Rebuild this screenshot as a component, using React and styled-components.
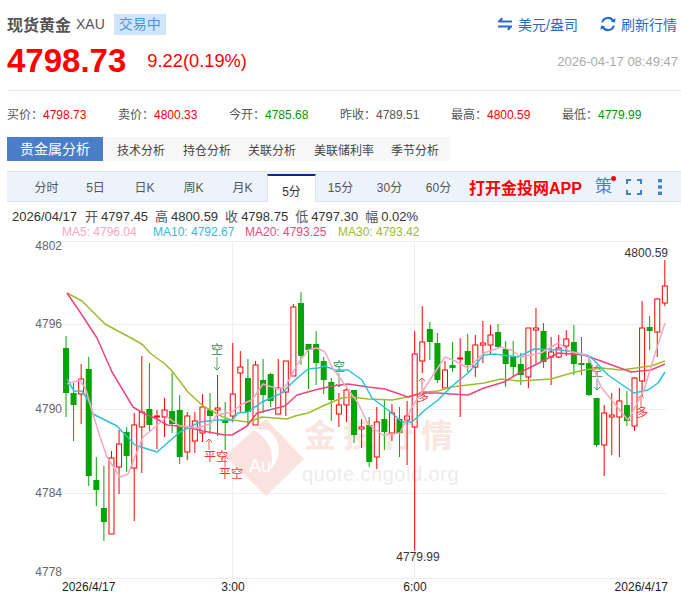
import React from "react";
import styled, { createGlobalStyle } from "styled-components";

const GlobalStyle = createGlobalStyle`
  html, body {
    margin: 0;
    padding: 0;
    background: #fff;
    overflow: hidden;
  }
  body {
    font-family: "Liberation Sans", "Noto Sans CJK SC", sans-serif;
  }
`;

const Page = styled.div`
  width: 681px;
  height: 594px;
  overflow: hidden;
  color: #555;
`;

const Header = styled.div`
  height: 90px;
  margin-left: 7px;
  border-bottom: 1px solid #e9e9e9;
  display: grid;
  grid-template-columns: 1fr auto;
  grid-template-rows: 37px 38px;
`;

const TitleGroup = styled.div`
  display: flex;
  align-items: center;
  padding-top: 11px;
  height: 26px;
`;

const Title = styled.span`
  font-size: 16px;
  font-weight: 700;
  color: #555;
`;

const Code = styled.span`
  font-size: 14px;
  color: #555;
  margin-left: 5px;
`;

const Badge = styled.span`
  margin-left: 9px;
  width: 52px;
  height: 21px;
  line-height: 21px;
  background: #d0e6fb;
  color: #4b93e6;
  font-size: 14px;
  text-align: center;
`;

const Actions = styled.div`
  display: flex;
  align-items: center;
  gap: 22px;
  padding-top: 10px;
  height: 27px;
  padding-right: 4px;
`;

const Action = styled.span`
  display: flex;
  align-items: center;
  gap: 5px;
  font-size: 14px;
  color: #2a6bc9;
  svg {
    display: block;
  }
`;

const PriceGroup = styled.div`
  display: flex;
  align-items: center;
  height: 38px;
  margin-top: 5px;
`;

const Price = styled.span`
  font-size: 33px;
  font-weight: 700;
  color: #f00;
  line-height: 38px;
`;

const Change = styled.span`
  font-size: 18.3px;
  color: #f00;
  margin-left: 21px;
`;

const Stamp = styled.div`
  justify-self: end;
  align-self: center;
  font-size: 13px;
  color: #aaa;
  padding: 11px 3px 0 0;
`;

const Stats = styled.div`
  display: grid;
  grid-template-columns: repeat(6, 111px);
  padding: 16px 0 0 7px;
  height: 30px;
`;

const Stat = styled.div`
  font-size: 12px;
  line-height: 16px;
  color: #555;
`;

const StatValue = styled.span`
  color: ${(p) => p.$color};
`;

const AnalysisNav = styled.div`
  display: flex;
  align-items: center;
  width: 443px;
  height: 24px;
  margin-left: 7px;
  background: #f8f8f8;
`;

const AnalysisMain = styled.div`
  width: 96px;
  height: 24px;
  line-height: 24px;
  background: #4a7ec9;
  color: #fff;
  font-size: 14px;
  text-align: center;
`;

const AnalysisLink = styled.span`
  font-size: 12px;
  color: #444;
  margin-left: ${(p) => p.$gap}px;
`;

const Toolbar = styled.div`
  display: flex;
  align-items: stretch;
  height: 29px;
  margin: 10px 0 0 7px;
  padding-left: 15px;
  background: #edf3fb;
  border-top: 1px solid #dbe4f2;
  border-bottom: 1px solid #dbe4f2;
`;

const Period = styled.div`
  width: 49px;
  box-sizing: border-box;
  display: flex;
  align-items: center;
  justify-content: center;
  font-size: 12px;
  color: #555;
  ${(p) =>
    p.$active &&
    `
    background: #fff;
    color: #333;
    margin: 2px 0 -1px;
    border-top: 2px solid #0b2a86;
    border-left: 1px solid #dbe4f2;
    border-right: 1px solid #dbe4f2;
    padding-top: 2px;
  `}
`;

const AppLink = styled.div`
  display: flex;
  align-items: center;
  margin-left: 6px;
  font-size: 16px;
  font-weight: 700;
  color: #f00;
  white-space: nowrap;
`;

const ToolGroup = styled.div`
  display: flex;
  align-items: center;
  margin-left: 13px;
`;

const Strategy = styled.span`
  position: relative;
  width: 17px;
  font-size: 17px;
  line-height: 20px;
  color: #4a7ec9;
  &::after {
    content: "";
    position: absolute;
    top: -1px;
    right: -4px;
    width: 5px;
    height: 5px;
    border-radius: 50%;
    background: #f00;
  }
`;

const ToolIcon = styled.svg`
  display: block;
  margin-left: ${(p) => p.$gap}px;
`;

const Quote = styled.div`
  display: flex;
  gap: 7px;
  padding: 7px 0 0 12px;
  height: 16px;
  font-size: 13px;
  line-height: 16px;
  color: #333;
  white-space: nowrap;
`;

const QuoteDate = styled.span`
  margin-right: 1px;
`;

const QuoteLabel = styled.span`
  color: #555;
  margin-right: 3px;
`;

const Legend = styled.div`
  display: flex;
  padding-left: 62px;
  height: 15px;
  font-size: 12px;
  line-height: 15px;
`;

const LegendItem = styled.span`
  color: ${(p) => p.$color};
  width: ${(p) => p.$width}px;
  white-space: nowrap;
`;

const ChartBox = styled.svg`
  display: block;
  width: 681px;
  height: 352px;
  overflow: visible;
`;

// the row under the chart only just shows at the bottom of the window
const IndicatorRow = styled.div`
  display: flex;
  padding: 1px 0 0 27px;
  height: 12px;
  font-size: 12px;
  line-height: 12px;
  white-space: nowrap;
`;

const Indicator = styled.span`
  color: ${(p) => p.$color};
  width: ${(p) => p.$width}px;
`;

// x = 66 + 7.58 * i, all values are page pixels: wick top, body top, body bottom, wick bottom
const candles = [
  ["g", 336, 348, 393, 417], ["g", 383, 393, 405, 441], ["r", 364, 379, 394, 424], ["g", 357, 369, 476, 486],
  ["g", 457, 480, 490, 506], ["g", 466, 508, 522, 541], ["r", 451, 458, 534, 534], ["r", 430, 444, 467, 494],
  ["g", 427, 432, 456, 472], ["r", 413, 425, 468, 521], ["r", 356, 412, 427, 473], ["g", 363, 409, 425, 431],
  ["r", 410, 416, 417, 449], ["r", 398, 410, 417, 437], ["g", 373, 411, 424, 433], ["g", 395, 410, 457, 464],
  ["r", 412, 416, 452, 460], ["r", 412, 421, 441, 453], ["r", 394, 407, 433, 442], ["g", 393, 410, 416, 434],
  ["r", 375, 408, 410, 436], ["g", 402, 420, 423, 450], ["r", 343, 394, 416, 422], ["r", 351, 367, 373, 413],
  ["g", 359, 378, 412, 426], ["r", 361, 365, 425, 425], ["g", 359, 380, 395, 413], ["g", 373, 374, 401, 407],
  ["r", 359, 388, 414, 414], ["r", 361, 361, 392, 416], ["r", 304, 307, 376, 376], ["g", 292, 303, 356, 365],
  ["g", 344, 344, 350, 389], ["g", 331, 344, 363, 385], ["g", 357, 361, 380, 394], ["g", 378, 382, 400, 421],
  ["r", 393, 405, 414, 427], ["r", 388, 390, 405, 422], ["g", 390, 390, 435, 443], ["r", 419, 427, 429, 448],
  ["g", 417, 425, 462, 467], ["r", 407, 422, 457, 469], ["g", 400, 419, 432, 450], ["r", 404, 413, 433, 441],
  ["g", 407, 419, 433, 457], ["r", 401, 416, 420, 465], ["r", 331, 354, 427, 551], ["r", 306, 342, 361, 373],
  ["g", 322, 329, 342, 360], ["g", 333, 343, 380, 383], ["r", 361, 370, 388, 388], ["g", 342, 365, 368, 372],
  ["r", 338, 358, 359, 417], ["g", 334, 351, 365, 372], ["r", 335, 345, 367, 377], ["r", 321, 343, 345, 363],
  ["r", 325, 335, 345, 355], ["g", 324, 332, 347, 347], ["g", 341, 349, 364, 387], ["g", 341, 357, 367, 376],
  ["g", 353, 364, 375, 385], ["r", 328, 328, 377, 388], ["r", 308, 328, 330, 365], ["g", 323, 331, 362, 368],
  ["r", 337, 352, 357, 385], ["r", 335, 348, 357, 358], ["r", 330, 339, 346, 356], ["g", 325, 342, 364, 375],
  ["g", 337, 363, 365, 375], ["g", 357, 363, 395, 396], ["g", 398, 398, 445, 447], ["r", 405, 413, 445, 476],
  ["r", 393, 415, 417, 455], ["r", 388, 401, 417, 457], ["g", 391, 405, 421, 426], ["r", 377, 378, 426, 431],
  ["r", 301, 328, 381, 397], ["g", 316, 327, 331, 350], ["r", 298, 299, 332, 357], ["r", 260, 286, 303, 306],
];

const maLines = [
  {
    color: "#9dbd2c",
    points: [[67, 293], [82, 301], [105, 324], [133, 339], [143, 345], [150, 353], [165, 364], [172, 371], [188, 392], [203, 406], [223, 417], [232, 420], [248, 422], [262, 417], [287, 419], [295, 416], [308, 413], [325, 405], [342, 398], [352, 397], [368, 399], [392, 400], [408, 397], [425, 392], [438, 391], [451, 387], [468, 385], [484, 383], [501, 379], [519, 381], [551, 379], [568, 374], [584, 370], [601, 368], [621, 370], [651, 366], [665, 361]],
  },
  {
    color: "#f0457e",
    points: [[67, 293], [80, 312], [97, 338], [112, 372], [133, 407], [143, 413], [157, 419], [167, 425], [187, 427], [203, 431], [225, 435], [232, 435], [247, 426], [257, 413], [285, 406], [297, 395], [315, 390], [332, 386], [348, 384], [368, 387], [385, 389], [408, 397], [422, 393], [438, 393], [451, 394], [468, 395], [484, 388], [504, 382], [521, 372], [541, 362], [558, 353], [584, 355], [601, 361], [631, 372], [651, 370], [665, 364]],
  },
  {
    color: "#2cc0de",
    points: [[67, 379], [74, 391], [82, 391], [90, 403], [93, 414], [103, 419], [117, 426], [135, 445], [157, 452], [180, 432], [200, 422], [217, 420], [232, 420], [238, 413], [248, 412], [262, 402], [282, 393], [295, 380], [308, 369], [318, 368], [325, 366], [335, 370], [348, 370], [362, 380], [372, 398], [388, 410], [402, 422], [412, 422], [425, 410], [438, 400], [451, 387], [468, 373], [484, 355], [494, 354], [518, 357], [534, 349], [561, 350], [574, 352], [591, 357], [608, 375], [621, 384], [634, 393], [648, 390], [658, 383], [665, 372]],
  },
  {
    color: "#f9a6c2",
    points: [[67, 384], [80, 380], [86, 390], [93, 414], [100, 437], [107, 457], [120, 477], [128, 474], [143, 437], [167, 417], [180, 426], [197, 428], [210, 424], [217, 415], [232, 412], [242, 404], [252, 400], [263, 384], [278, 389], [285, 387], [297, 365], [308, 350], [317, 348], [325, 352], [332, 367], [347, 388], [358, 403], [368, 424], [383, 435], [400, 433], [412, 407], [422, 392], [445, 357], [455, 361], [468, 368], [484, 353], [501, 347], [511, 350], [521, 357], [541, 353], [558, 343], [571, 352], [588, 355], [601, 387], [618, 408], [628, 420], [631, 415], [644, 390], [654, 357], [665, 323]],
  },
];

const signals = [
  { label: "空", x: 217, textX: 217, textY: 354, from: 357, to: 370, color: "#2a8a4a", up: false },
  { label: "平空", x: 209, textX: 216, textY: 461, from: 439, to: 450, color: "#f33", up: true },
  { label: "平空", x: 225, textX: 231, textY: 478, from: 456, to: 467, color: "#f33", up: true },
  { label: "空", x: 339, textX: 339, textY: 371, from: 373, to: 387, color: "#2a8a4a", up: false },
  { label: "多", x: 422, textX: 423, textY: 401, from: 378, to: 390, color: "#f33", up: true },
  { label: "空", x: 597, textX: 597, textY: 376, from: 379, to: 390, color: "#2a8a4a", up: false },
  { label: "多", x: 641, textX: 642, textY: 417, from: 395, to: 406, color: "#f33", up: true },
];

const gridYs = [241, 324, 409, 493, 578];
const priceLabels = [
  ["4802", 250],
  ["4796", 328],
  ["4790", 413],
  ["4784", 497],
  ["4778", 576],
];

const CHART_TOP = 240;

const Candle = ({ index, data }) => {
  const [kind, high, top, bottom, low] = data;
  const x = 66 + 7.58 * index;
  if (kind === "g") {
    return (
      <g>
        <line x1={x} x2={x} y1={high} y2={low} stroke="#06a406" strokeWidth="1" />
        <rect x={x - 3} y={top} width="6" height={bottom - top} fill="#06a406" />
      </g>
    );
  }
  return (
    <g>
      <line x1={x} x2={x} y1={high} y2={top} stroke="#f00" strokeWidth="1" />
      <line x1={x} x2={x} y1={bottom} y2={low} stroke="#f00" strokeWidth="1" />
      <rect x={x - 2.5} y={top} width="5" height={bottom - top} fill="#fff" stroke="#f00" strokeWidth="1" />
    </g>
  );
};

const Signal = ({ item }) => (
  <g stroke={item.color} fill="none" strokeWidth="0.8">
    <line x1={item.x} x2={item.x} y1={item.from} y2={item.to} />
    {item.up ? (
      <polyline points={`${item.x - 3},${item.from + 3} ${item.x},${item.from} ${item.x + 3},${item.from + 3}`} />
    ) : (
      <polyline points={`${item.x - 3},${item.to - 3} ${item.x},${item.to} ${item.x + 3},${item.to - 3}`} />
    )}
    <text x={item.textX} y={item.textY} fontSize="12" textAnchor="middle" fill={item.color} stroke="none">
      {item.label}
    </text>
  </g>
);

const Chart = () => (
  <ChartBox viewBox={`0 ${CHART_TOP} 681 352`}>
    {gridYs.map((y) => (
      <line key={y} x1="62" x2="667" y1={y + 0.5} y2={y + 0.5} stroke="#eee" />
    ))}
    <line x1="232.5" x2="232.5" y1="241" y2="578" stroke="#eee" />
    <line x1="414.5" x2="414.5" y1="241" y2="578" stroke="#eee" />

    {/* watermark */}
    <g>
      <path d="M266 419 L304 459 L266 496 L225 456 Z" fill="#fae3df" />
      <path d="M250 428 C268 436 276 452 270 470 C282 458 282 440 268 430 Z" fill="#fff" />
      <text x="260" y="472" fontSize="18" fill="#fff" textAnchor="middle" fontFamily="Liberation Sans">Au</text>
      <text x="304" y="447" fontSize="32" fontWeight="700" letterSpacing="7" fill="#f9e6e1" fontFamily="Noto Sans CJK SC">金投行情</text>
      <text x="302" y="481" fontSize="20" letterSpacing="0.5" fill="#ececec" fontFamily="Liberation Sans">quote.cngold.org</text>
    </g>

    {candles.map((c, i) => (
      <Candle key={i} index={i} data={c} />
    ))}
    {signals.map((s, i) => (
      <Signal key={i} item={s} />
    ))}
    {maLines.map((line) => (
      <polyline
        key={line.color}
        points={line.points.map((p) => p.join(",")).join(" ")}
        fill="none"
        stroke={line.color}
        strokeWidth="1.5"
        strokeLinejoin="round"
      />
    ))}

    {priceLabels.map(([label, y]) => (
      <text key={label} x="62" y={y} fontSize="12" fill="#666" textAnchor="end">
        {label}
      </text>
    ))}
    <text x="668" y="257" fontSize="12" fill="#333" textAnchor="end">4800.59</text>
    <text x="418" y="561" fontSize="12" fill="#333" textAnchor="middle">4779.99</text>
    <text x="62" y="591" fontSize="12" fill="#222">2026/4/17</text>
    <text x="233" y="591" fontSize="12" fill="#222" textAnchor="middle">3:00</text>
    <text x="415" y="591" fontSize="12" fill="#222" textAnchor="middle">6:00</text>
    <text x="668" y="591" fontSize="12" fill="#222" textAnchor="end">2026/4/17</text>
  </ChartBox>
);

const stats = [
  ["买价：", "4798.73", "#f00"],
  ["卖价：", "4800.33", "#f00"],
  ["今开：", "4785.68", "#090"],
  ["昨收：", "4789.51", "#555"],
  ["最高：", "4800.59", "#f00"],
  ["最低：", "4779.99", "#090"],
];

const periods = ["分时", "5日", "日K", "周K", "月K", "5分", "15分", "30分", "60分"];

const quoteItems = [
  ["开", "4797.45"],
  ["高", "4800.59"],
  ["收", "4798.75"],
  ["低", "4797.30"],
  ["幅", "0.02%"],
];

const App = () => (
  <Page>
    <GlobalStyle />
    <Header>
      <TitleGroup>
        <Title>现货黄金</Title>
        <Code>XAU</Code>
        <Badge>交易中</Badge>
      </TitleGroup>
      <Actions>
        <Action>
          <svg width="16" height="14" viewBox="0 0 16 14" fill="#2a6bc9">
            <path d="M4.5 0.5 L1 4 L1 5.6 L15 5.6 L15 3.6 L4.6 3.6 L6 2 Z" />
            <path d="M11.5 13.5 L15 10 L15 8.4 L1 8.4 L1 10.4 L11.4 10.4 L10 12 Z" />
          </svg>
          美元/盎司
        </Action>
        <Action>
          <svg width="16" height="16" viewBox="0 0 16 16" fill="none" stroke="#2a6bc9" strokeWidth="2">
            <path d="M2.2 6.5 A6 6 0 0 1 13.4 5.2" />
            <path d="M13.8 9.5 A6 6 0 0 1 2.6 10.8" />
            <path d="M15.5 2 L15 6.5 L10.8 5.6 Z" fill="#2a6bc9" stroke="none" />
            <path d="M0.5 14 L1 9.5 L5.2 10.4 Z" fill="#2a6bc9" stroke="none" />
          </svg>
          刷新行情
        </Action>
      </Actions>
      <PriceGroup>
        <Price>4798.73</Price>
        <Change>9.22(0.19%)</Change>
      </PriceGroup>
      <Stamp>2026-04-17 08:49:47</Stamp>
    </Header>
    <Stats>
      {stats.map(([label, value, color]) => (
        <Stat key={label}>
          {label}
          <StatValue $color={color}>{value}</StatValue>
        </Stat>
      ))}
    </Stats>
    <AnalysisNav>
      <AnalysisMain>贵金属分析</AnalysisMain>
      <AnalysisLink $gap={14}>技术分析</AnalysisLink>
      <AnalysisLink $gap={18}>持仓分析</AnalysisLink>
      <AnalysisLink $gap={17}>关联分析</AnalysisLink>
      <AnalysisLink $gap={18}>美联储利率</AnalysisLink>
      <AnalysisLink $gap={17}>季节分析</AnalysisLink>
    </AnalysisNav>
    <Toolbar>
      {periods.map((p) => (
        <Period key={p} $active={p === "5分"}>
          {p}
        </Period>
      ))}
      <AppLink>打开金投网APP</AppLink>
      <ToolGroup>
        <Strategy>策</Strategy>
        <ToolIcon $gap={14} width="16" height="16" viewBox="0 0 16 16" fill="none" stroke="#4a7ec9" strokeWidth="2">
          <path d="M1 5 V1 H5 M11 1 H15 V5 M15 11 V15 H11 M5 15 H1 V11" />
        </ToolIcon>
        <ToolIcon $gap={16} width="4" height="16" viewBox="0 0 4 16" fill="#4a7ec9">
          <rect x="0" y="0" width="4" height="3.4" />
          <rect x="0" y="6.3" width="4" height="3.4" />
          <rect x="0" y="12.6" width="4" height="3.4" />
        </ToolIcon>
      </ToolGroup>
    </Toolbar>
    <Quote>
      <QuoteDate>2026/04/17</QuoteDate>
      {quoteItems.map(([label, value]) => (
        <span key={label}>
          <QuoteLabel>{label}</QuoteLabel>
          {value}
        </span>
      ))}
    </Quote>
    <Legend>
      <LegendItem $color="#f9a6c2" $width={91}>MA5: 4796.04</LegendItem>
      <LegendItem $color="#2cc0de" $width={92}>MA10: 4792.67</LegendItem>
      <LegendItem $color="#f0457e" $width={93}>MA20: 4793.25</LegendItem>
      <LegendItem $color="#9dbd2c" $width={90}>MA30: 4793.42</LegendItem>
    </Legend>
    <Chart />
    <IndicatorRow>
      <Indicator $color="#777" $width={45}>MACD</Indicator>
      <Indicator $color="#2aa8e0" $width={90}>DIF: 1.45</Indicator>
      <Indicator $color="#d62fc0" $width={91}>DEA: 0.85</Indicator>
      <Indicator $color="#c00" $width={70}>MACD: 1.21</Indicator>
    </IndicatorRow>
  </Page>
);

export default App;
